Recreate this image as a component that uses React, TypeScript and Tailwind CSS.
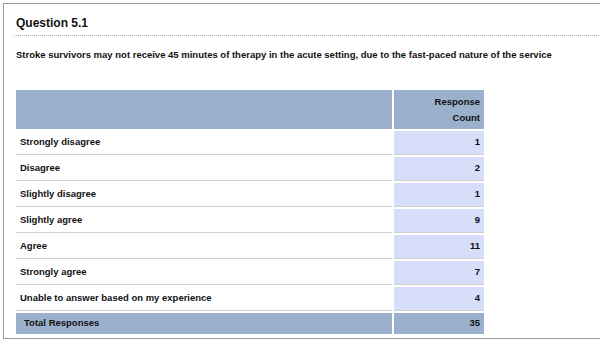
import React from "react";

const rows: [string, number][] = [
  ["Strongly disagree", 1],
  ["Disagree", 2],
  ["Slightly disagree", 1],
  ["Slightly agree", 9],
  ["Agree", 11],
  ["Strongly agree", 7],
  ["Unable to answer based on my experience", 4],
];

export default function App() {
  return (
    <div
      className="w-[600px] h-[343px] overflow-hidden bg-white pt-[3px] pl-[3px]"
      style={{ fontFamily: '"Liberation Sans", Arial, sans-serif' }}
    >
      <div className="w-[620px] h-[336px] border border-[#9a9a9a] pl-[10px] pr-[20px]">
        <div className="pt-[10px] pl-[2px] text-[12px] font-bold leading-[18px] text-[#111]">
          Question 5.1
        </div>
        <div className="mt-[3px] border-t border-dotted border-[#aaa] w-[585px]" />
        <div className="mt-[12px] pl-[2px] text-[9.5px] font-bold leading-[14px] text-[#111] whitespace-nowrap">
          Stroke survivors may not receive 45 minutes of therapy in the acute setting, due to the fast-paced nature of the service
        </div>
        <table className="mt-[26px] border-separate border-spacing-[2px] text-[9.5px] font-bold text-[#111]">
          <tbody>
            <tr>
              <td className="w-[376px] h-[39px] bg-[#9bb0cc]" />
              <td className="w-[90px] h-[39px] bg-[#9bb0cc] text-right pr-[4px] leading-[16px]">
                Response
                <br />
                Count
              </td>
            </tr>
            {rows.map(([label, n]) => (
              <tr key={label}>
                <td className="h-[24px] pl-[4px] border-b border-[#cfcfcf] bg-white">{label}</td>
                <td className="h-[24px] pr-[4px] text-right border-b border-[#cfcfcf] bg-[#d6defa]">{n}</td>
              </tr>
            ))}
            <tr>
              <td className="h-[21px] pl-[8px] bg-[#9bb0cc]">Total Responses</td>
              <td className="h-[21px] pr-[4px] text-right bg-[#9bb0cc]">35</td>
            </tr>
          </tbody>
        </table>
      </div>
    </div>
  );
}
